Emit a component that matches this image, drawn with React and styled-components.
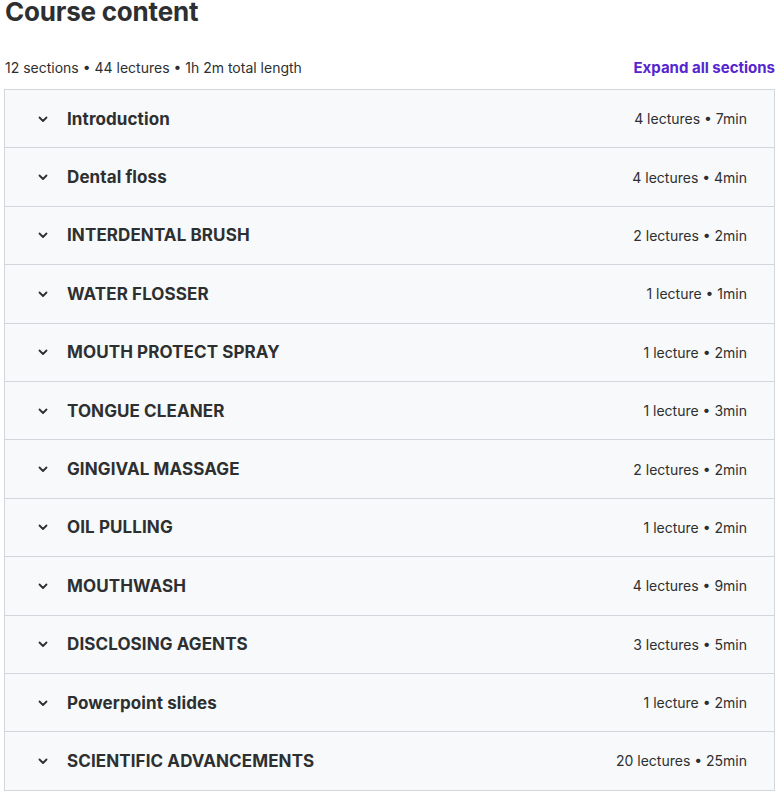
import React from "react";
import styled, { createGlobalStyle } from "styled-components";

const GlobalStyle = createGlobalStyle`
  body {
    margin: 0;
    background: #ffffff;
    font-family: Inter, "Noto Sans", sans-serif;
    color: #2d2f31;
  }
`;

const Wrapper = styled.div`
  width: 771px;
  padding-left: 4px;
`;

const Heading = styled.h2`
  margin: 0 0 0 1px;
  font-size: 26px;
  line-height: 24px;
  font-weight: 700;
  letter-spacing: -0.2px;
`;

const SummaryBar = styled.div`
  display: flex;
  justify-content: space-between;
  align-items: center;
  height: 22px;
  margin: 32px 0 11px;
`;

const Summary = styled.span`
  font-size: 14px;
  margin-left: 1px;
  color: #2d2f31;
`;

const ExpandLink = styled.button`
  border: none;
  background: none;
  padding: 0;
  font-family: inherit;
  font-size: 15px;
  font-weight: 700;
  color: #5624d0;
  cursor: pointer;
`;

const Panel = styled.div`
  border: 1px solid #d1d7dc;
  border-bottom: none;
`;

const Row = styled.div`
  display: flex;
  align-items: center;
  height: 57.4px;
  padding: 0 27px 0 30px;
  background: #f7f9fa;
  border-bottom: 1px solid #d1d7dc;
  cursor: pointer;
`;

const Chevron = styled.svg`
  width: 16px;
  height: 16px;
  margin-right: 16px;
  flex-shrink: 0;
`;

const Title = styled.span`
  flex: 1;
  font-size: 17px;
  font-weight: 700;
  letter-spacing: 0.1px;
  color: #2d2f31;
`;

const Meta = styled.span`
  font-size: 14px;
  color: #2d2f31;
`;

const sections = [
  ["Introduction", "4 lectures • 7min"],
  ["Dental floss", "4 lectures • 4min"],
  ["INTERDENTAL BRUSH", "2 lectures • 2min"],
  ["WATER FLOSSER", "1 lecture • 1min"],
  ["MOUTH PROTECT SPRAY", "1 lecture • 2min"],
  ["TONGUE CLEANER", "1 lecture • 3min"],
  ["GINGIVAL MASSAGE", "2 lectures • 2min"],
  ["OIL PULLING", "1 lecture • 2min"],
  ["MOUTHWASH", "4 lectures • 9min"],
  ["DISCLOSING AGENTS", "3 lectures • 5min"],
  ["Powerpoint slides", "1 lecture • 2min"],
  ["SCIENTIFIC ADVANCEMENTS", "20 lectures • 25min"],
];

const App = () => (
  <Wrapper>
    <GlobalStyle />
    <Heading>Course content</Heading>
    <SummaryBar>
      <Summary>12 sections • 44 lectures • 1h 2m total length</Summary>
      <ExpandLink>Expand all sections</ExpandLink>
    </SummaryBar>
    <Panel>
      {sections.map(([title, meta]) => (
        <Row key={title}>
          <Chevron viewBox="0 0 16 16">
            <path
              d="M4.5 6.5 L8 10 L11.5 6.5"
              fill="none"
              stroke="#2d2f31"
              strokeWidth="1.8"
              strokeLinecap="round"
              strokeLinejoin="round"
            />
          </Chevron>
          <Title>{title}</Title>
          <Meta>{meta}</Meta>
        </Row>
      ))}
    </Panel>
  </Wrapper>
);

export default App;
